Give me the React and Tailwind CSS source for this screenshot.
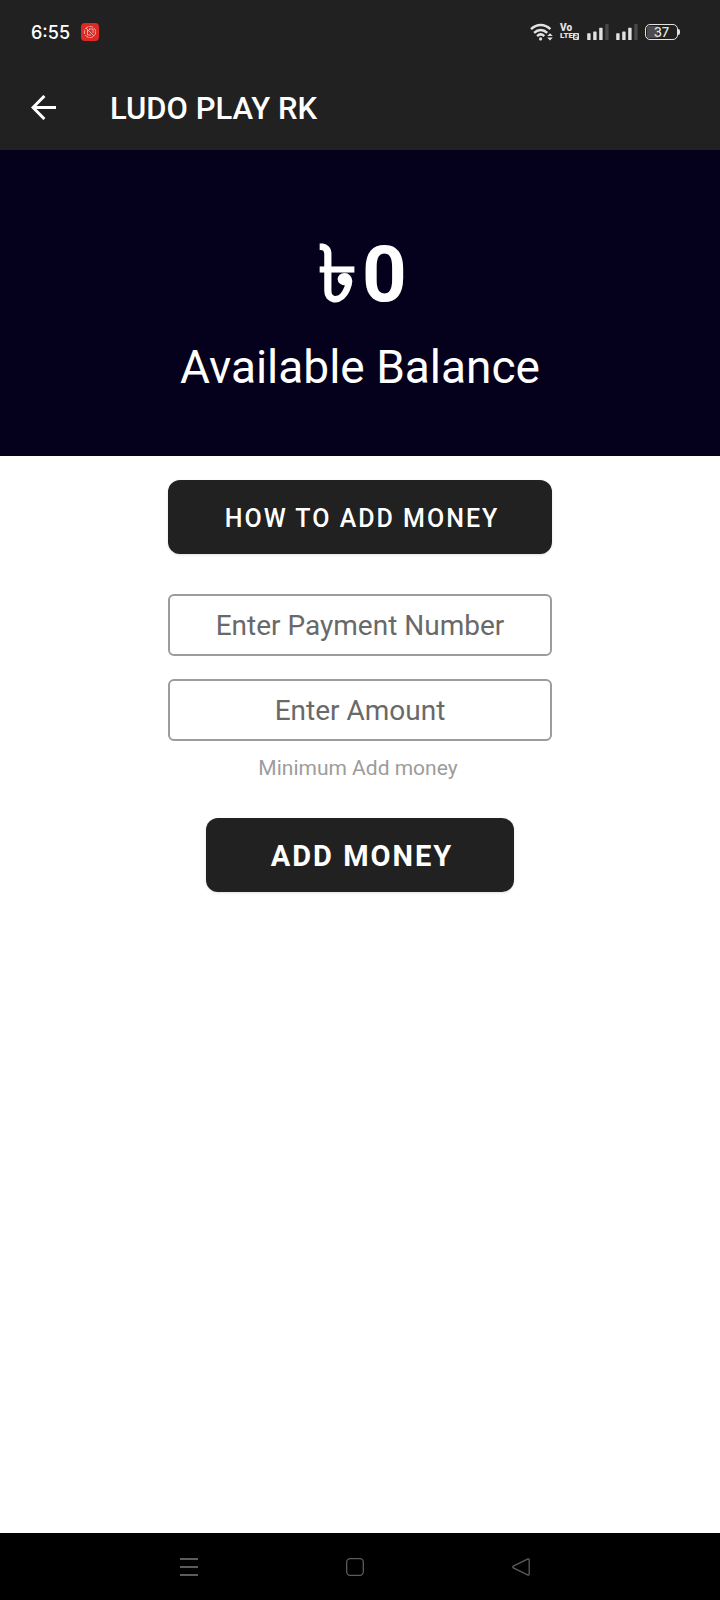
import React, { useState } from "react";

const WifiIcon = () => (
  <svg width="23" height="18" viewBox="0 0 23 18" fill="none" aria-hidden="true">
    <g stroke="#e2e2e2" strokeWidth="2.4">
      <path d="M1 6.2C6.5 0.6 14.8 0.6 20.4 6.2" />
      <path d="M4.1 9.8C8 6 13.4 6 17.2 9.8" />
      <path d="M7.1 13.1C9.4 10.9 12 10.9 14.3 13.1" />
    </g>
    <circle cx="10.6" cy="15.9" r="1.6" fill="#e2e2e2" />
    <path d="M17.2 13L20 10.2L22.8 13ZM17.2 14.6L20 17.4L22.8 14.6Z" fill="#e2e2e2" />
  </svg>
);

const SignalIcon = () => (
  <svg width="22" height="16" viewBox="0 0 22 16" aria-hidden="true">
    <rect x="0.2" y="9.2" width="3.4" height="6.8" rx="0.6" fill="#e2e2e2" />
    <rect x="6.2" y="7.5" width="3.4" height="8.5" rx="0.6" fill="#e2e2e2" />
    <rect x="12.2" y="3.8" width="3.4" height="12.2" rx="0.6" fill="#e2e2e2" />
    <rect x="18.2" y="0" width="3.4" height="16" rx="0.6" fill="#484848" />
  </svg>
);

const VolteIcon = () => (
  <div className="w-5 font-[Roboto,sans-serif] font-black text-[#e2e2e2]">
    <div className="text-[10px] leading-[8px]">Vo</div>
    <div className="flex items-center text-[8px] leading-[8px]">
      LTE
      <svg width="6" height="7" viewBox="0 0 6 7" fill="none" className="shrink-0" aria-hidden="true">
        <rect width="6" height="7" rx="1" fill="#e2e2e2" />
        <path d="M1.8 1.7H4.2V3.5H1.8V5.3H4.2" stroke="#212121" strokeWidth="0.9" />
      </svg>
    </div>
  </div>
);

const BatteryIcon = ({ level }) => (
  <div className="flex items-center">
    <div className="relative flex h-4 w-[33px] items-center justify-center overflow-hidden rounded-[5px] border border-[#e2e2e2]">
      <div className="absolute inset-y-px left-px bg-[#4c4c4c]" style={{ width: `${level}%` }} />
      <span className="relative font-[Inter,sans-serif] text-[13px] leading-none font-medium text-[#e2e2e2]">
        {level}
      </span>
    </div>
    <div className="h-[6px] w-[2px] rounded-r bg-[#e2e2e2]" />
  </div>
);

const AppBadge = () => (
  <svg width="18" height="18" viewBox="0 0 18 18" fill="none" aria-hidden="true">
    <rect width="18" height="18" rx="4" fill="#dc2923" />
    <g stroke="#f7c4c0" strokeWidth="0.8">
      <circle cx="9" cy="9" r="5.6" strokeDasharray="4 1" />
      <path d="M5 5L13 13M6.5 12V7M6.5 12H10M8 6H12V10M9 6L6 9" />
    </g>
  </svg>
);

const StatusBar = () => (
  <div className="flex h-16 items-center justify-between pr-10 pl-[31px]">
    <div className="flex items-center gap-[11px]">
      <span className="pt-px font-[Inter,sans-serif] text-[18px] leading-6 font-medium">6:55</span>
      <AppBadge />
    </div>
    <div className="flex items-center gap-[7px]">
      <WifiIcon />
      <VolteIcon />
      <SignalIcon />
      <SignalIcon />
      <BatteryIcon level={37} />
    </div>
  </div>
);

const AmountField = ({ label, value, onChange }) => (
  <input
    type="text"
    inputMode="numeric"
    aria-label={label}
    placeholder={label}
    value={value}
    onChange={(e) => onChange(e.target.value)}
    className="h-[62px] w-full rounded-md border-2 border-[#9c9c9c] bg-white text-center text-[28px] text-[#212121] placeholder:text-[#696969]"
  />
);

const App = () => {
  const [number, setNumber] = useState("");
  const [amount, setAmount] = useState("");

  return (
    <div className="flex min-h-screen flex-col bg-white font-[Roboto,sans-serif]">
      <header className="bg-[#212121] text-white">
        <StatusBar />
        <div className="flex h-[86px] items-center gap-[54px] pl-[31px]">
          <button type="button" aria-label="Back">
            <svg width="25" height="25" viewBox="0 0 25 25" fill="none" stroke="white" strokeWidth="3">
              <path d="M25 12.5H2M13.4 1L2 12.5L13.4 24" />
            </svg>
          </button>
          <h1 className="pt-1 text-[31px] leading-10 font-medium">LUDO PLAY RK</h1>
        </div>
      </header>

      {/* Balance */}
      <section className="flex h-[306px] flex-col items-center bg-[#05001b] pt-[77px] text-white">
        <p className="text-[78px] leading-[96px] font-bold">
          <span className="px-[5px]">৳</span>0
        </p>
        <p className="text-[46px] leading-[88px]">Available Balance</p>
      </section>

      {/* Deposit form */}
      <main className="flex flex-1 flex-col items-center px-4 pt-6">
        <form
          className="flex w-full max-w-96 flex-col items-center"
          onSubmit={(e) => e.preventDefault()}
        >
          <button
            type="button"
            className="mb-10 h-[74px] w-full rounded-xl bg-[#212121] pt-1 pl-1 text-[25px] font-medium tracking-[2px] text-white shadow-sm"
          >
            HOW TO ADD MONEY
          </button>
          <div className="flex w-full flex-col gap-[23px]">
            <AmountField label="Enter Payment Number" value={number} onChange={setNumber} />
            <AmountField label="Enter Amount" value={amount} onChange={setAmount} />
          </div>
          <p className="mt-[14px] mb-9 pr-1 text-[21px] leading-[27px] text-[#9c9c9c]">
            Minimum Add money
          </p>
          <button
            type="submit"
            className="h-[74px] w-4/5 rounded-xl bg-[#212121] pt-1 pl-1 text-[29px] font-bold tracking-[2px] text-white shadow-sm"
          >
            ADD MONEY
          </button>
        </form>
      </main>

      {/* System navigation */}
      <nav className="flex h-[67px] items-center justify-center gap-[148px] bg-black pr-[10px]">
        <button type="button" aria-label="Recent apps">
          <svg width="18" height="18" viewBox="0 0 18 18" stroke="#5c5c5c" strokeWidth="1.8">
            <path d="M0 1H18M0 9H18M0 17H18" />
          </svg>
        </button>
        <button type="button" aria-label="Home">
          <svg width="18" height="18" viewBox="0 0 18 18" fill="none" stroke="#5c5c5c" strokeWidth="1.3">
            <rect x="0.7" y="0.7" width="16.6" height="16.6" rx="3.5" />
          </svg>
        </button>
        <button type="button" aria-label="Back to previous">
          <svg width="18" height="18" viewBox="0 0 18 18" fill="none" stroke="#5c5c5c" strokeWidth="1.3">
            <path d="M16 0.9L1.3 8.1Q0.2 9 1.3 9.9L16 17.1Q17.2 17.3 17.2 16V2Q17.2 0.7 16 0.9Z" />
          </svg>
        </button>
      </nav>
    </div>
  );
};

export default App;
